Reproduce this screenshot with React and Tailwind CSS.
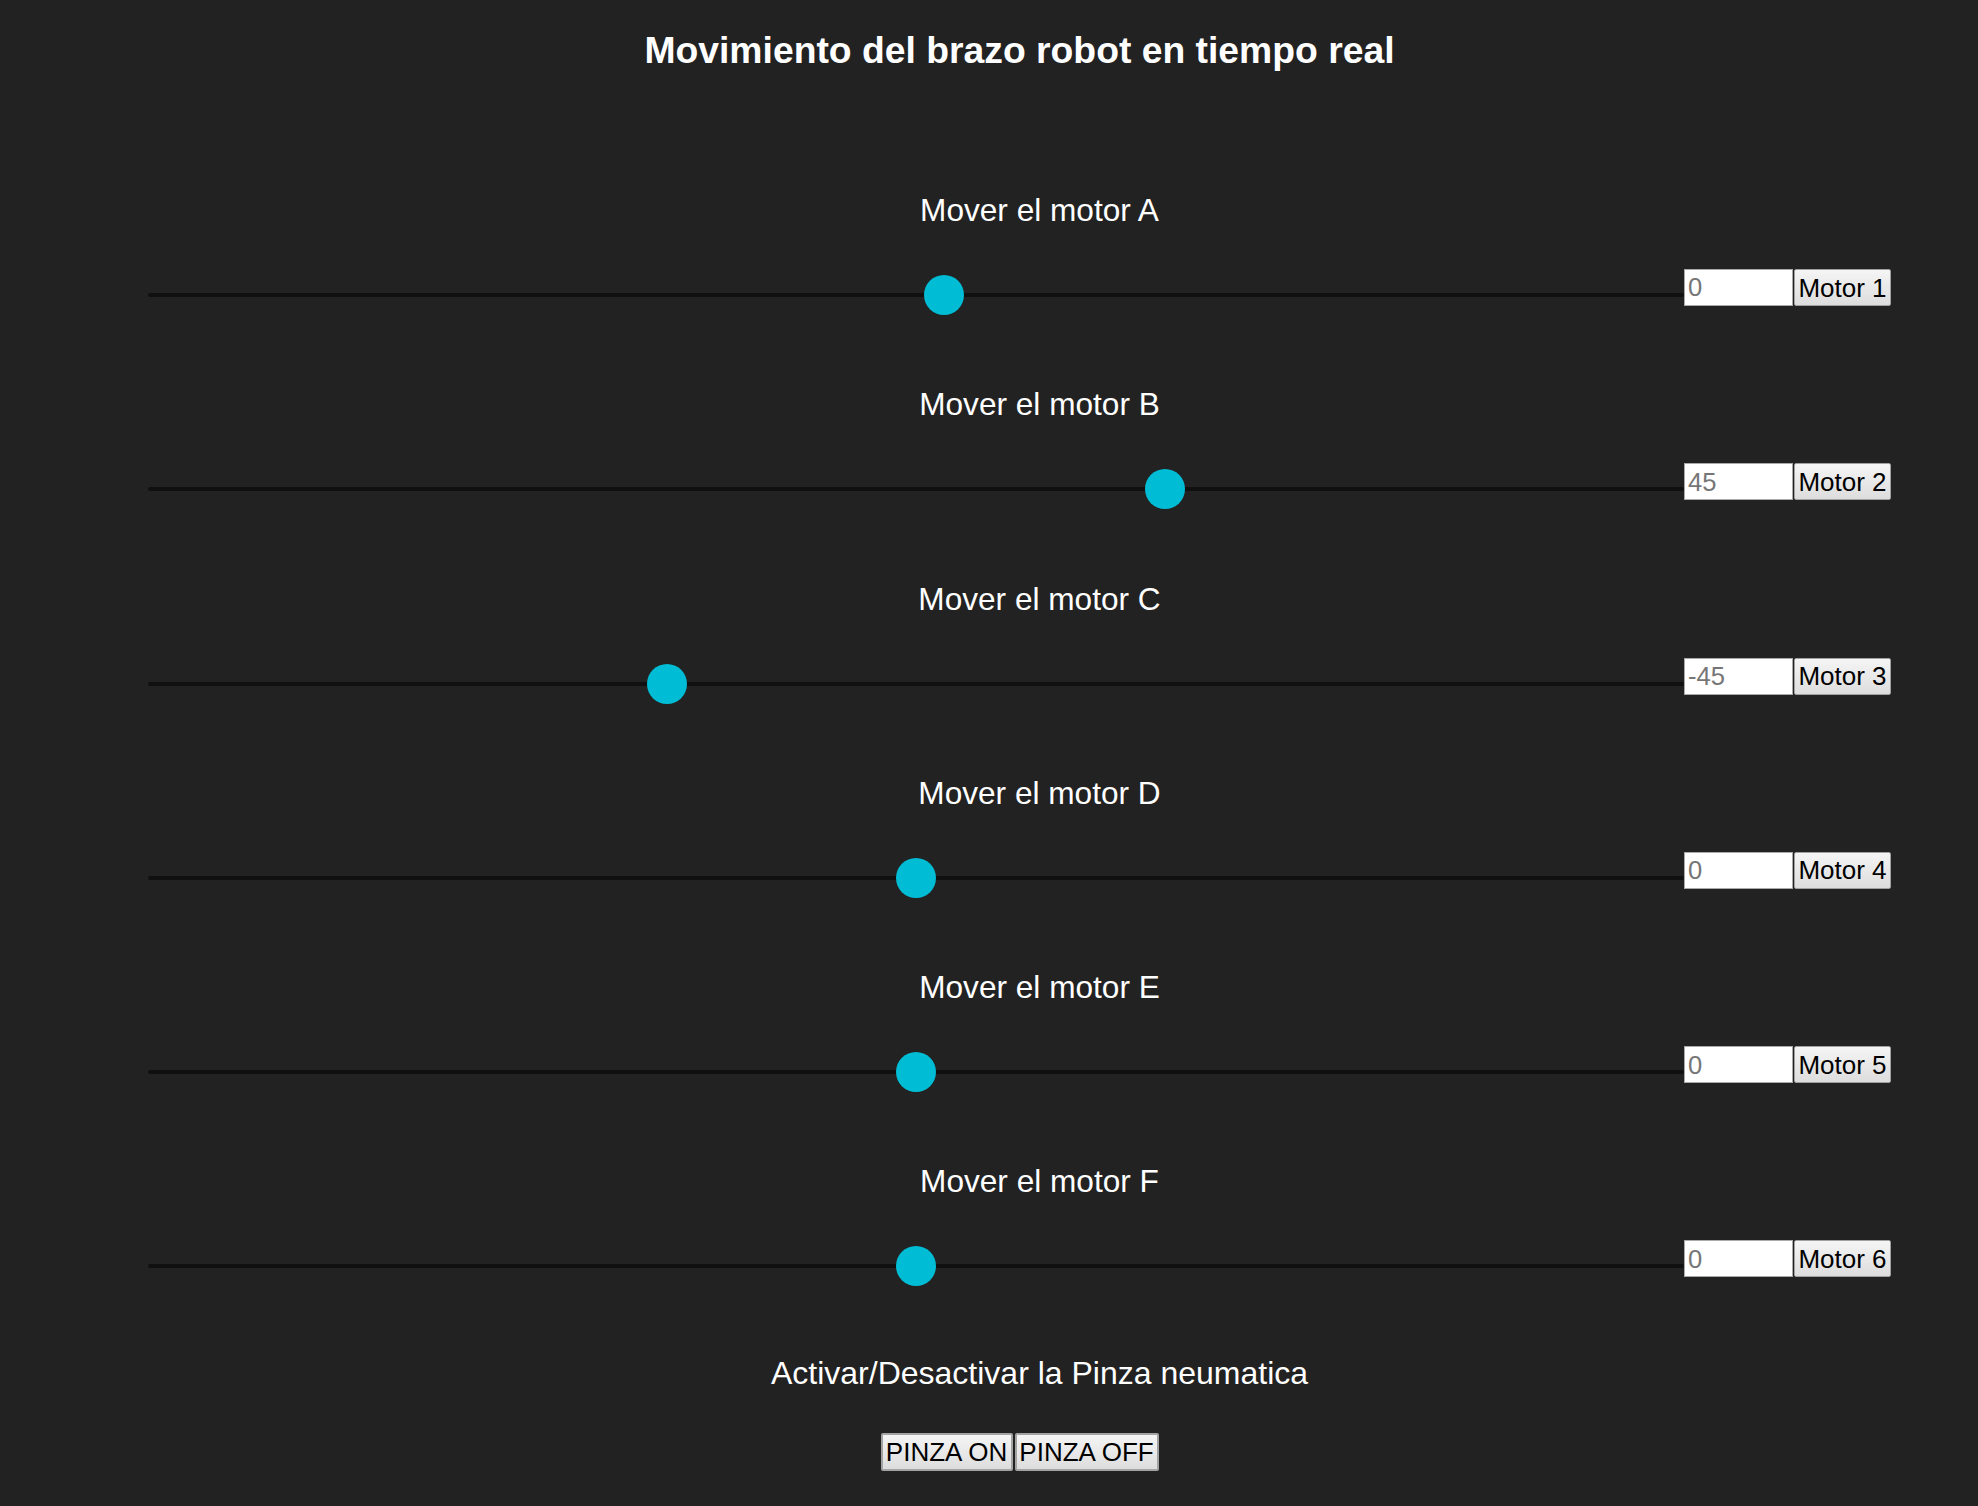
import React from "react";

const MIN = -135;
const MAX = 135;

const motors = [
  { letter: "A", id: 1, value: 5, placeholder: "0" },
  { letter: "B", id: 2, value: 45, placeholder: "45" },
  { letter: "C", id: 3, value: -45, placeholder: "-45" },
  { letter: "D", id: 4, value: 0, placeholder: "0" },
  { letter: "E", id: 5, value: 0, placeholder: "0" },
  { letter: "F", id: 6, value: 0, placeholder: "0" },
];

const MotorRow = ({ motor }) => {
  const f = (motor.value - MIN) / (MAX - MIN);

  return (
    <div>
      <p className="pl-[40px] text-center text-[31.6px] leading-[36px] text-white">
        Mover el motor {motor.letter}
      </p>
      <div className="mt-[41px] flex h-[52px] items-start">
        <div className="relative h-[52px] flex-1">
          <div className="absolute left-0 right-0 top-[24px] h-[4px] rounded-full bg-[#101010]" />
          <div
            className="absolute top-[6px] h-[40px] w-[40px] rounded-full bg-[#00bcd4]"
            style={{ left: `calc(${f * 100}% - ${f * 40}px)` }}
          />
        </div>
        <input
          type="text"
          placeholder={motor.placeholder}
          className="h-[37px] w-[109px] border border-[#a9a9a9] bg-white px-[3px] text-[25.6px] text-black outline-none placeholder:text-[#767676]"
        />
        <button className="ml-[1px] h-[37px] w-[97px] rounded-[2px] border border-[#a0a0a0] bg-linear-to-b from-[#f5f5f5] to-[#dddddd] text-[26px] leading-none text-black">
          Motor {motor.id}
        </button>
      </div>
    </div>
  );
};

const App = () => {
  return (
    <div className="min-h-screen bg-[#222222] pl-[148px] pr-[87px] pt-[28px] font-['Liberation_Sans',Arial,sans-serif] text-white">
      <h1 className="text-center text-[37.3px] font-bold leading-[44px]">
        Movimiento del brazo robot en tiempo real
      </h1>

      <div className="mt-[120px] flex flex-col gap-[65.3px]">
        {motors.map((motor) => (
          <MotorRow key={motor.id} motor={motor} />
        ))}
      </div>

      <p className="mt-[62.5px] pl-[40px] text-center text-[32px] leading-[36px]">
        Activar/Desactivar la Pinza neumatica
      </p>

      <div className="mt-[42px] flex justify-center gap-[2px]">
        <button className="h-[38px] w-[132px] rounded-[2px] border-2 border-[#a3a3a3] bg-linear-to-b from-[#f5f5f5] to-[#dddddd] text-[26px] leading-none text-black">
          PINZA ON
        </button>
        <button className="h-[38px] w-[144px] rounded-[2px] border-2 border-[#a3a3a3] bg-linear-to-b from-[#f5f5f5] to-[#dddddd] text-[26px] leading-none text-black">
          PINZA OFF
        </button>
      </div>
    </div>
  );
};

export default App;
